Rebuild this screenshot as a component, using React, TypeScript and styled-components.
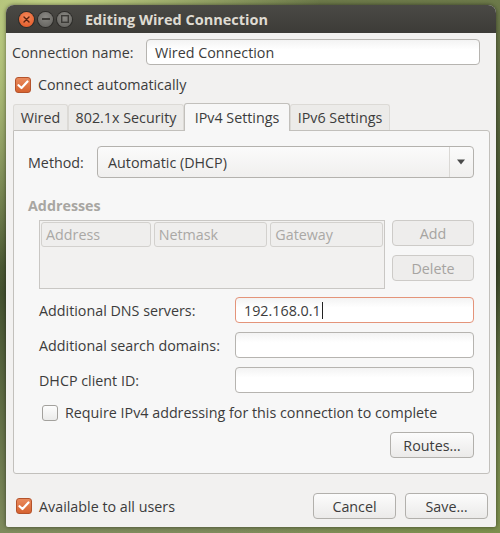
import styled, { createGlobalStyle } from "styled-components";

const GlobalStyle = createGlobalStyle`
  html, body {
    margin: 0;
    padding: 0;
  }
  body {
    width: 500px;
    height: 533px;
    overflow: hidden;
    font-family: "Open Sans", "DejaVu Sans", sans-serif;
    font-size: 14.3px;
    color: #3c3c3c;
    background:
      radial-gradient(circle at 10% 5%, #c9d98a 0, transparent 40%),
      radial-gradient(circle at 95% 100%, #7c8f4c 0, transparent 35%),
      linear-gradient(180deg, #6d7a4a 0%, #3d4a2a 50%, #7f8b5c 100%);
  }
`;

const Desktop = styled.div`
  width: 500px;
  height: 533px;
  box-sizing: border-box;
  padding: 5px 4px 6px 6px;
  display: flex;
`;

const Window = styled.div`
  flex: 1;
  display: flex;
  flex-direction: column;
  background: #f2f1f0;
  border-radius: 8px 8px 2px 2px;
  box-shadow: 0 0 4px rgba(0, 0, 0, 0.5);
  overflow: hidden;
`;

const TitleBar = styled.div`
  height: 28px;
  flex: none;
  display: flex;
  align-items: center;
  padding-left: 13px;
  gap: 4px;
  background: linear-gradient(180deg, #4a4945 0%, #3c3b37 100%);
`;

const WinButton = styled.span<{ $close?: boolean }>`
  width: 15px;
  height: 15px;
  border-radius: 50%;
  display: flex;
  align-items: center;
  justify-content: center;
  background: ${(p) =>
    p.$close
      ? "radial-gradient(circle at 50% 35%, #f58a5c, #e0521f)"
      : "radial-gradient(circle at 50% 35%, #8a8984, #5f5e5a)"};
  box-shadow: 0 0 0 1px #2d2c29;
`;

const Title = styled.span`
  margin-left: 9px;
  color: #dfdbd2;
  font-weight: 700;
  font-size: 14.5px;
`;

const Body = styled.div`
  flex: 1;
  display: flex;
  flex-direction: column;
  padding: 6px 6px 8px 6px;
`;

const Row = styled.div<{ $top?: number }>`
  display: flex;
  align-items: center;
  margin-top: ${(p) => p.$top ?? 0}px;
`;

const Label = styled.span<{ $width?: number; $muted?: boolean }>`
  width: ${(p) => (p.$width ? `${p.$width}px` : "auto")};
  flex: none;
  color: ${(p) => (p.$muted ? "#a8a6a2" : "#3c3c3c")};
  white-space: nowrap;
`;

const Entry = styled.div<{ $focused?: boolean; $right?: number; $height?: number }>`
  flex: 1;
  height: ${(p) => p.$height ?? 26}px;
  box-sizing: border-box;
  margin-right: ${(p) => p.$right ?? 0}px;
  display: flex;
  align-items: center;
  padding-left: 8px;
  background: linear-gradient(180deg, #f3f3f3 0%, #ffffff 40%);
  border: 1px solid ${(p) => (p.$focused ? "#e4947a" : "#b6b4b0")};
  border-radius: 4px;
`;

const Caret = styled.span`
  width: 1px;
  height: 17px;
  background: #222;
  margin-left: 1px;
`;

const CheckBox = styled.span<{ $checked?: boolean; $indent?: number }>`
  width: 16px;
  height: 16px;
  box-sizing: border-box;
  flex: none;
  margin-left: ${(p) => p.$indent ?? 0}px;
  border-radius: 3px;
  display: flex;
  align-items: center;
  justify-content: center;
  border: 1px solid ${(p) => (p.$checked ? "#b4532b" : "#a3a19d")};
  background: ${(p) =>
    p.$checked
      ? "linear-gradient(180deg, #e98a5d 0%, #d6622f 100%)"
      : "linear-gradient(180deg, #fdfdfd 0%, #ebebea 100%)"};
`;

const CheckText = styled.span`
  margin-left: 7px;
  white-space: nowrap;
`;

const Tabs = styled.div`
  margin: 9px 0 0 1px;
  display: flex;
  align-items: flex-end;
  height: 27px;
`;

const Tab = styled.div<{ $active?: boolean; $width: number }>`
  width: ${(p) => p.$width}px;
  height: ${(p) => (p.$active ? 28 : 26)}px;
  box-sizing: border-box;
  display: flex;
  align-items: center;
  justify-content: center;
  background: ${(p) => (p.$active ? "#f7f7f7" : "#ecebe9")};
  border: 1px solid ${(p) => (p.$active ? "#c2c0bc" : "#dcdad6")};
  border-bottom: none;
  border-radius: 3px 3px 0 0;
  margin-bottom: ${(p) => (p.$active ? -1 : 0)}px;
  position: relative;
  z-index: ${(p) => (p.$active ? 1 : 0)};
`;

const Panel = styled.div`
  margin-left: 1px;
  height: 344px;
  box-sizing: border-box;
  display: flex;
  flex-direction: column;
  padding: 15px 15px 0 14px;
  background: #f7f7f7;
  border: 1px solid #c2c0bc;
  border-radius: 0 3px 3px 3px;
`;

const Combo = styled.div`
  flex: 1;
  height: 32px;
  box-sizing: border-box;
  display: flex;
  align-items: center;
  padding-left: 10px;
  border: 1px solid #b4b2ae;
  border-radius: 4px;
  background: linear-gradient(180deg, #fbfbfb 0%, #f0efee 100%);
`;

const ComboText = styled.span`
  flex: 1;
`;

const ComboArrow = styled.span`
  width: 22px;
  height: 100%;
  display: flex;
  align-items: center;
  justify-content: center;
  border-left: 1px solid #dad8d5;
  margin-right: 1px;
`;

const SectionTitle = styled.div`
  margin-top: 18px;
  font-weight: 700;
  color: #a8a6a2;
`;

const AddressArea = styled.div`
  margin: 5px 0 0 11px;
  display: flex;
  gap: 7px;
`;

const Table = styled.div`
  width: 346px;
  height: 69px;
  box-sizing: border-box;
  display: flex;
  align-items: flex-start;
  gap: 3px;
  padding: 1px;
  border: 1px solid #c9c7c4;
  background: #f2f1f0;
`;

const Column = styled.div<{ $width: number }>`
  width: ${(p) => p.$width}px;
  height: 25px;
  box-sizing: border-box;
  display: flex;
  align-items: center;
  padding-left: 4px;
  color: #aaa8a5;
  background: #efeeed;
  border: 1px solid #d3d1ce;
  border-radius: 3px;
`;

const ButtonStack = styled.div`
  flex: 1;
  display: flex;
  flex-direction: column;
  gap: 9px;
`;

const Button = styled.div<{ $disabled?: boolean; $width?: number }>`
  width: ${(p) => (p.$width ? `${p.$width}px` : "auto")};
  height: 26px;
  box-sizing: border-box;
  display: flex;
  align-items: center;
  justify-content: center;
  color: ${(p) => (p.$disabled ? "#a6a4a1" : "#3c3c3c")};
  border: 1px solid ${(p) => (p.$disabled ? "#cdcbc8" : "#b2b0ac")};
  border-radius: 4px;
  background: ${(p) =>
    p.$disabled
      ? "#eeedec"
      : "linear-gradient(180deg, #fcfcfc 0%, #ebeae9 100%)"};
`;

const FieldRow = styled.div<{ $top: number }>`
  display: flex;
  align-items: center;
  margin: ${(p) => p.$top}px 0 0 11px;
`;

const RightRow = styled.div`
  display: flex;
  justify-content: flex-end;
  margin-top: 10px;
`;

const Footer = styled.div`
  margin-top: auto;
  display: flex;
  align-items: center;
  padding-left: 4px;
`;

const FooterButtons = styled.div`
  margin-left: auto;
  display: flex;
  gap: 9px;
  margin-right: 2px;
`;

const Check = () => (
  <svg width="12" height="10" viewBox="0 0 12 10">
    <path d="M1.5 5.2 L4.5 8 L10.5 1.5" fill="none" stroke="#fff" strokeWidth="2.2" strokeLinecap="round" strokeLinejoin="round" />
  </svg>
);

const App = () => {
  return (
    <>
      <GlobalStyle />
      <Desktop>
        <Window>
          <TitleBar>
            <WinButton $close>
              <svg width="7" height="7" viewBox="0 0 7 7">
                <path d="M1 1 L6 6 M6 1 L1 6" stroke="#5a2210" strokeWidth="1.4" strokeLinecap="round" />
              </svg>
            </WinButton>
            <WinButton>
              <svg width="8" height="2" viewBox="0 0 8 2">
                <rect x="0" y="0" width="8" height="2" fill="#3c3b37" />
              </svg>
            </WinButton>
            <WinButton>
              <svg width="8" height="8" viewBox="0 0 8 8">
                <rect x="0.7" y="0.7" width="6.6" height="6.6" fill="none" stroke="#3c3b37" strokeWidth="1.4" />
              </svg>
            </WinButton>
            <Title>Editing Wired Connection</Title>
          </TitleBar>
          <Body>
            <Row>
              <Label $width={134}>Connection name:</Label>
              <Entry $right={10}>Wired Connection</Entry>
            </Row>
            <Row $top={10}>
              <CheckBox $checked $indent={3}>
                <Check />
              </CheckBox>
              <CheckText>Connect automatically</CheckText>
            </Row>
            <Tabs>
              <Tab $width={55}>Wired</Tab>
              <Tab $width={116}>802.1x Security</Tab>
              <Tab $width={106} $active>IPv4 Settings</Tab>
              <Tab $width={100}>IPv6 Settings</Tab>
            </Tabs>
            <Panel>
              <Row>
                <Label $width={69}>Method:</Label>
                <Combo>
                  <ComboText>Automatic (DHCP)</ComboText>
                  <ComboArrow>
                    <svg width="10" height="6" viewBox="0 0 10 6">
                      <path d="M1 0.5 L9 0.5 L5 5.5 Z" fill="#4a4a4a" />
                    </svg>
                  </ComboArrow>
                </Combo>
              </Row>
              <SectionTitle>Addresses</SectionTitle>
              <AddressArea>
                <Table>
                  <Column $width={110}>Address</Column>
                  <Column $width={114}>Netmask</Column>
                  <Column $width={113}>Gateway</Column>
                </Table>
                <ButtonStack>
                  <Button $disabled>Add</Button>
                  <Button $disabled>Delete</Button>
                </ButtonStack>
              </AddressArea>
              <FieldRow $top={8}>
                <Label $width={196}>Additional DNS servers:</Label>
                <Entry $focused>
                  192.168.0.1
                  <Caret />
                </Entry>
              </FieldRow>
              <FieldRow $top={9}>
                <Label $width={196}>Additional search domains:</Label>
                <Entry />
              </FieldRow>
              <FieldRow $top={9}>
                <Label $width={196}>DHCP client ID:</Label>
                <Entry />
              </FieldRow>
              <FieldRow $top={10}>
                <CheckBox $indent={3} />
                <CheckText>Require IPv4 addressing for this connection to complete</CheckText>
              </FieldRow>
              <RightRow>
                <Button $width={84}>Routes…</Button>
              </RightRow>
            </Panel>
            <Footer>
              <CheckBox $checked>
                <Check />
              </CheckBox>
              <CheckText>Available to all users</CheckText>
              <FooterButtons>
                <Button $width={83}>Cancel</Button>
                <Button $width={83}>Save…</Button>
              </FooterButtons>
            </Footer>
          </Body>
        </Window>
      </Desktop>
    </>
  );
};

export default App;
